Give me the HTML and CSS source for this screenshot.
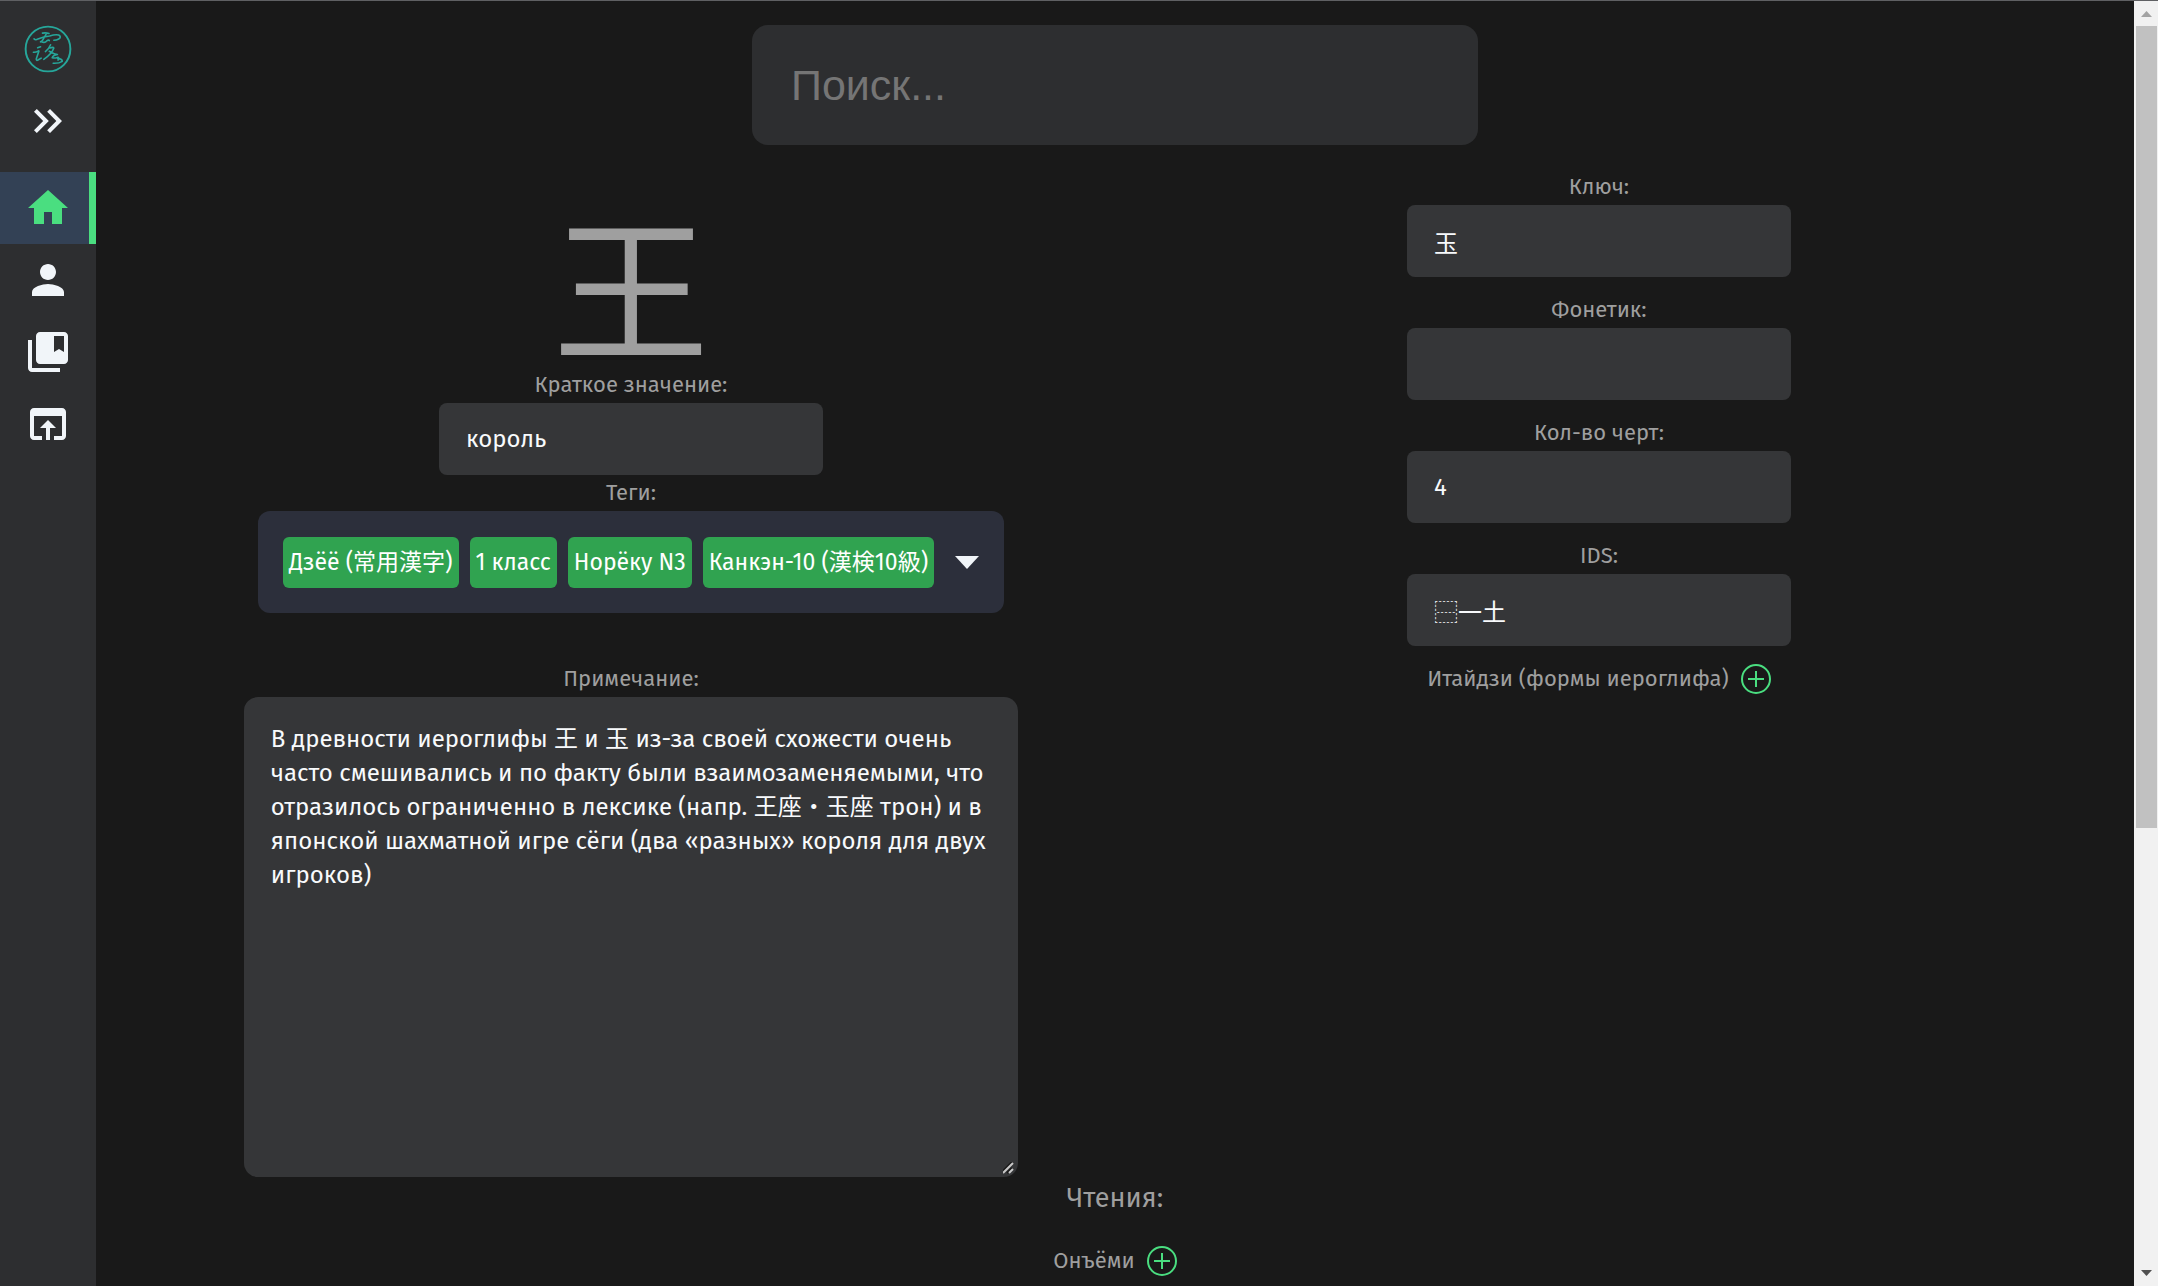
FILE: index.html
```html
<!DOCTYPE html>
<html lang="ru">
<head>
<meta charset="utf-8">
<meta name="viewport" content="width=device-width, initial-scale=1">
<title>王</title>
<link rel="stylesheet" href="styles.css">
</head>
<body>
<div class="app">
  <nav class="sidebar" aria-label="Меню">
    <a class="logo" href="#" aria-label="Главная">
      <svg viewBox="70 73 148 148" fill="none" stroke="currentColor" stroke-linecap="round" stroke-linejoin="round">
        <circle cx="144" cy="147" r="69" stroke-width="6"/>
        <path stroke-width="5" d="M127 98q10-2 20 1M101 116q5 5 12 0q18-7 36-9q18-6 28-3q10 6 0 12q-7 4-15 4M138 102l-10 17q-2 4-7 6M124 125q8 4 14-1M140 122q6-4 8-1M112 143l9-3M99 157q6 1 16-4M116 153l-8 24q-1 7 5 4l10-6M152 134q-6 14-16 21M150 144q10-4 12 0q-6 18-31 35M148 154q12 8 25 10q-14 2-16 10q8 2 16-1q8 0 2 8M174 176q14 2 14 9q-10 7-28 6"/>
      </svg>
    </a>
    <button class="toggle" type="button" aria-label="Развернуть">
      <svg class="icon" viewBox="0 0 24 24"><path d="M6.41 6L5 7.41 9.58 12 5 16.59 6.41 18l6-6zM13 6l-1.41 1.41L16.17 12l-4.58 4.59L13 18l6-6z"/></svg>
    </button>
    <a class="nav-item active" href="#" aria-label="Домой">
      <svg class="icon" viewBox="0 0 24 24"><path d="M10 20v-6h4v6h5v-8h3L12 3 2 12h3v8z"/></svg>
    </a>
    <a class="nav-item" href="#" aria-label="Профиль">
      <svg class="icon" viewBox="0 0 24 24"><path d="M12 12c2.21 0 4-1.79 4-4s-1.79-4-4-4-4 1.79-4 4 1.79 4 4 4zm0 2c-2.67 0-8 1.34-8 4v2h16v-2c0-2.66-5.33-4-8-4z"/></svg>
    </a>
    <a class="nav-item" href="#" aria-label="Коллекции">
      <svg class="icon" viewBox="0 0 24 24"><path d="M4 6H2v14c0 1.1.9 2 2 2h14v-2H4V6zm16-4H8c-1.1 0-2 .9-2 2v12c0 1.1.9 2 2 2h12c1.1 0 2-.9 2-2V4c0-1.1-.9-2-2-2zm0 10l-2.5-1.5L15 12V4h5v8z"/></svg>
    </a>
    <a class="nav-item" href="#" aria-label="Открыть">
      <svg class="icon" viewBox="0 0 24 24"><path d="M19 4H5c-1.11 0-2 .9-2 2v12c0 1.1.89 2 2 2h4v-2H5V8h14v10h-4v2h4c1.1 0 2-.9 2-2V6c0-1.1-.89-2-2-2zm-7 6l-4 4h3v6h2v-6h3l-4-4z"/></svg>
    </a>
  </nav>

  <main class="content">
    <input class="search" type="search" placeholder="Поиск..." aria-label="Поиск">

    <div class="columns">
      <section class="column">
        <h1 class="kanji">王</h1>
        <label class="label" for="meaning">Краткое значение:</label>
        <input class="field" id="meaning" type="text" value="король">
        <span class="label" id="tags-label">Теги:</span>
        <div class="tags" role="group" aria-labelledby="tags-label">
          <span class="tag">Дзёё (常用漢字)</span>
          <span class="tag">1 класс</span>
          <span class="tag">Норёку N3</span>
          <span class="tag">Канкэн-10 (漢検10級)</span>
          <button class="tags-open" type="button" aria-label="Выбрать теги">
            <svg class="caret" viewBox="0 0 24 13"><path d="M0 0h24L12 13z"/></svg>
          </button>
        </div>
        <label class="label note-label" for="note">Примечание:</label>
        <textarea class="note" id="note" spellcheck="false">В древности иероглифы 王 и 玉 из-за своей схожести очень часто смешивались и по факту были взаимозаменяемыми, что отразилось ограниченно в лексике (напр. 王座・玉座 трон) и в японской шахматной игре сёги (два «разных» короля для двух игроков)</textarea>
      </section>

      <section class="column column-side">
        <label class="label" for="radical">Ключ:</label>
        <input class="field" id="radical" type="text" value="玉">
        <label class="label" for="phonetic">Фонетик:</label>
        <input class="field" id="phonetic" type="text" value="">
        <label class="label" for="strokes">Кол-во черт:</label>
        <input class="field" id="strokes" type="text" value="4">
        <label class="label" for="ids">IDS:</label>
        <input class="field" id="ids" type="text" value="⿱一土">
        <div class="add-row">
          <span class="label">Итайдзи (формы иероглифа)</span>
          <button class="add" type="button" aria-label="Добавить итайдзи">
            <svg viewBox="0 0 30 30"><circle cx="15" cy="15" r="14"/><path d="M15 7v16M7 15h16"/></svg>
          </button>
        </div>
      </section>
    </div>

    <section class="readings">
      <h2 class="readings-title">Чтения:</h2>
      <div class="add-row">
        <span class="label">Онъёми</span>
        <button class="add" type="button" aria-label="Добавить онъёми">
          <svg viewBox="0 0 30 30"><circle cx="15" cy="15" r="14"/><path d="M15 7v16M7 15h16"/></svg>
        </button>
      </div>
    </section>
  </main>

  <div class="scrollbar" aria-hidden="true">
    <svg class="arrow arrow-up" viewBox="0 0 11 6"><path d="M0 6h11L5.5 0z"/></svg>
    <div class="thumb"></div>
    <svg class="arrow" viewBox="0 0 11 6"><path d="M0 0h11L5.5 6z"/></svg>
  </div>
</div>
</body>
</html>
```
FILE: styles.css
```css
*, *::before, *::after {
  box-sizing: border-box;
}

body {
  margin: 0;
  background: #191919;
  color: #9f9f9f;
  font: 22px/36px "Fira Sans", "Noto Sans", "Noto Sans CJK JP", sans-serif;
}

button {
  padding: 0;
  border: 0;
  background: none;
  color: inherit;
  cursor: pointer;
}

.app {
  display: flex;
  height: 100vh;
  overflow: hidden;
  border-top: 1px solid #5f6063;
}

.sidebar {
  display: flex;
  flex-direction: column;
  flex: none;
  width: 96px;
  padding-top: 24px;
  background: #2d2e30;
  color: #f1f5f9;
}

.logo {
  align-self: center;
  width: 48px;
  height: 48px;
  color: #26a69a;
}

.logo svg {
  display: block;
}

.toggle {
  height: 48px;
  margin: 24px 0 27px;
}

.icon {
  display: block;
  width: 48px;
  height: 48px;
  margin: 0 auto;
  fill: currentColor;
}

.nav-item {
  display: flex;
  align-items: center;
  height: 72px;
  color: inherit;
}

.nav-item.active {
  background: #334155;
  box-shadow: inset -7px 0 #4ade80;
  color: #4ade80;
}

.content {
  flex: 1;
  min-width: 0;
  padding: 24px 51px 0;
}

.search {
  display: block;
  width: 726px;
  max-width: 100%;
  height: 120px;
  margin: 0 auto 24px;
  padding: 0 39px;
  border: 0;
  border-radius: 16px;
  outline: 0;
  background: #2d2e30;
  color: #f1f5f9;
  font: 43px "Liberation Sans", sans-serif;
}

.search::placeholder {
  color: #757575;
}

.columns {
  display: grid;
  grid-template-columns: 1fr 1fr;
}

.column {
  display: flex;
  flex-direction: column;
  align-items: center;
}

.column-side .field {
  margin-bottom: 15px;
}

.kanji {
  margin: 32px 0 6px;
  font: 156px/160px "Noto Sans CJK JP", sans-serif;
}

.label {
  display: block;
}

.field {
  width: 384px;
  max-width: 100%;
  height: 72px;
  padding: 0 27px;
  border: 0;
  border-radius: 8px;
  outline: 0;
  background: #353638;
  color: #f8fafc;
  font: inherit;
  font-size: 24px;
}

.tags {
  display: flex;
  align-items: center;
  gap: 11px;
  width: 746px;
  max-width: 100%;
  height: 102px;
  padding: 0 25px;
  border-radius: 12px;
  background: #2c2f3b;
}

.tag {
  padding: 0 6px;
  border-radius: 6px;
  background: #30a350;
  color: #fff;
  font-size: 23px;
  line-height: 51px;
  white-space: nowrap;
}

.tags-open {
  margin-left: auto;
}

.caret {
  display: block;
  width: 24px;
  height: 13px;
  fill: #f1f5f9;
}

.note-label {
  margin-top: 48px;
}

.note {
  display: block;
  width: 80%;
  height: 480px;
  padding: 25px 27px;
  border: 0;
  border-radius: 14px;
  outline: 0;
  background: #353638;
  color: #f8fafc;
  font: inherit;
  font-size: 24px;
  line-height: 34px;
}

.note::-webkit-scrollbar {
  width: 23px;
}

.note::-webkit-resizer {
  background: url("data:image/svg+xml,%3Csvg xmlns='http://www.w3.org/2000/svg' width='23' height='23' fill='none' stroke-width='2'%3E%3Cpath stroke='%23191919' d='M6 19L17 8M12 19l5-5'/%3E%3Cpath stroke='%23c8c8c8' d='M8 19L18 9M14 19l4-4'/%3E%3C/svg%3E") right bottom no-repeat;
}

.add-row {
  display: flex;
  align-items: center;
  justify-content: center;
  gap: 12px;
}

.add svg {
  display: block;
  width: 30px;
  height: 30px;
  fill: none;
  stroke: #4ade80;
  stroke-width: 2;
}

.readings-title {
  margin: 0 0 24px;
  font-size: 27px;
  font-weight: 400;
  line-height: 42px;
  text-align: center;
}

.scrollbar {
  display: flex;
  flex-direction: column;
  align-items: center;
  flex: none;
  width: 24px;
  padding: 10px 0;
  background: #f1f1f1;
}

.arrow {
  width: 11px;
  height: 6px;
  fill: #505050;
}

.arrow-up {
  fill: #a3a3a3;
}

.thumb {
  width: 21px;
  height: calc(64% - 8px);
  margin: 9px 0 auto;
  background: #c1c1c1;
}
```
